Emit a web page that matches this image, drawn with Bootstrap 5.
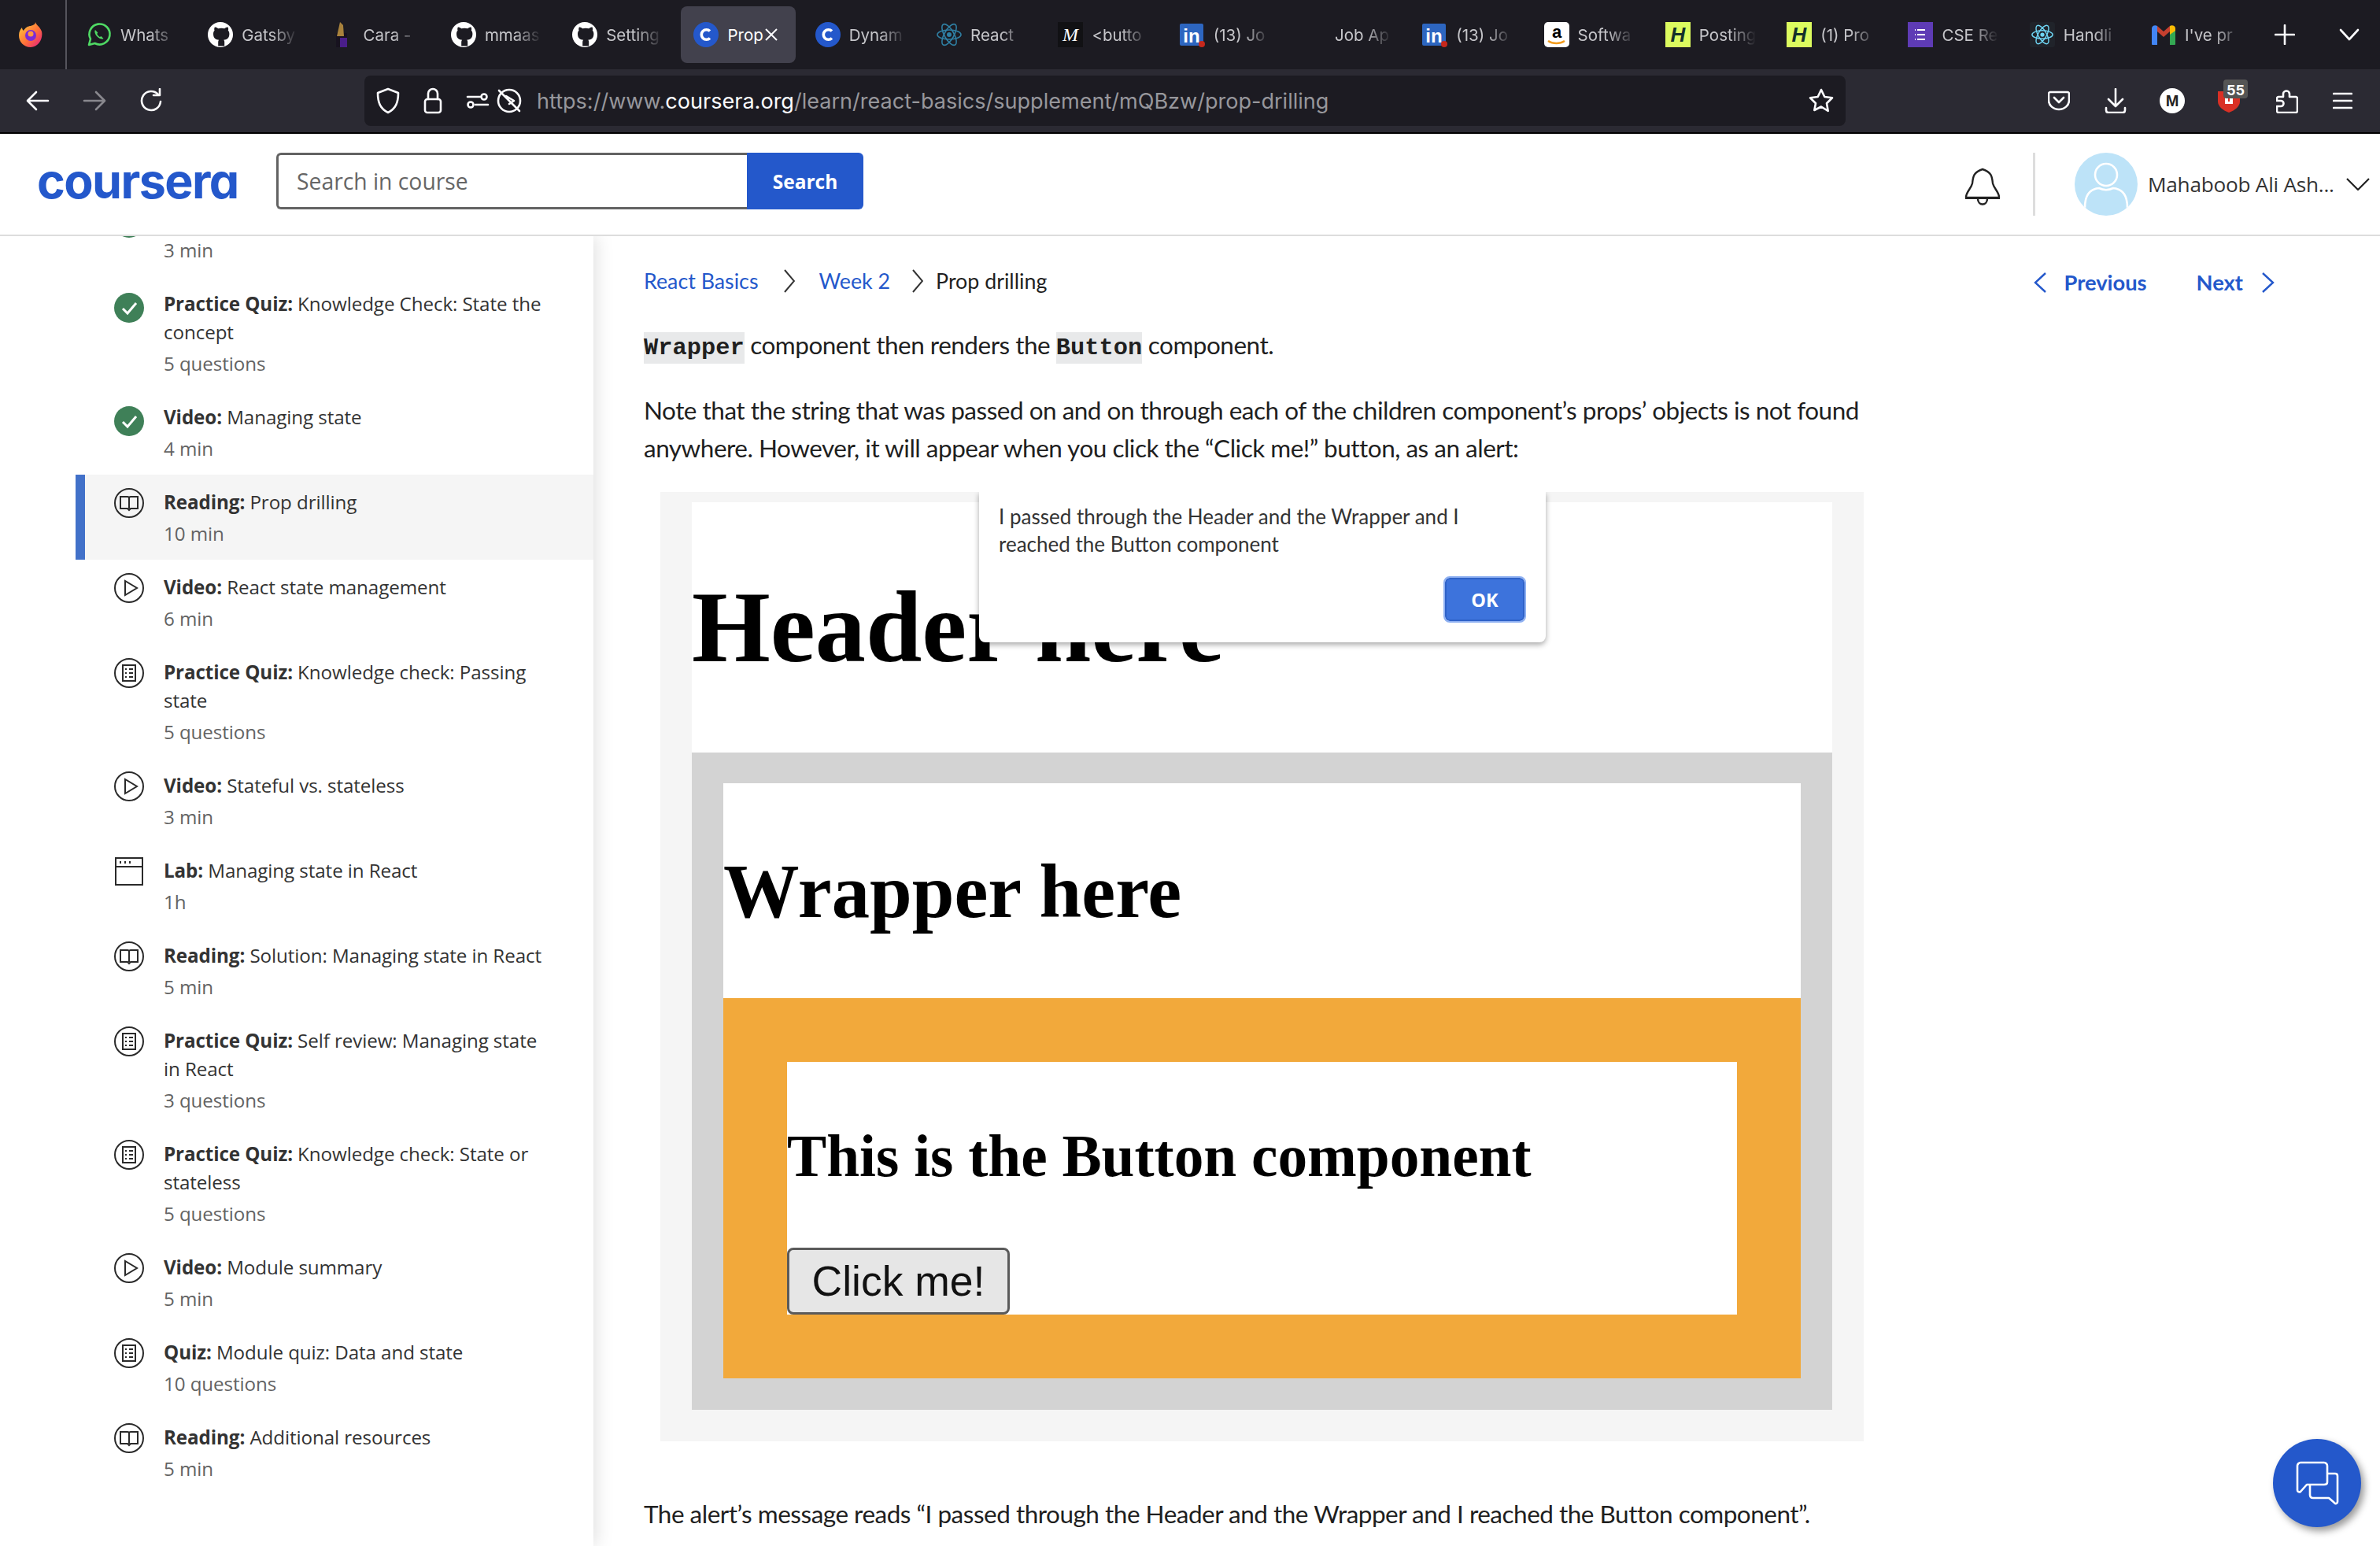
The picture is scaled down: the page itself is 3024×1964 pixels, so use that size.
<!DOCTYPE html>
<html lang="en">
<head>
<meta charset="utf-8">
<title>Prop drilling | Coursera</title>
<link href="https://cdn.jsdelivr.net/npm/bootstrap@5.3.0/dist/css/bootstrap.min.css" rel="stylesheet">
<style>
html,body{width:3024px;height:1964px;overflow:hidden;margin:0;background:#fff}
body{font-family:"Lato","Liberation Sans",sans-serif;color:#1f1f1f}
.ff-tabs{height:88px;background:#1c1b22;color:#c6c6ca;font-family:"Inter","Liberation Sans",sans-serif}
.ff-logo{width:85px;height:88px;border-right:2px solid #55545c;flex:none;padding-right:5px}
.ff-strip{padding-top:8px;margin-left:5px}
.ff-tab{width:154.3px;height:72px;flex:none;position:relative;display:flex;align-items:center;padding-left:20px;gap:11px}
.ff-tab.on::before{content:"";position:absolute;left:4px;right:5px;top:0;bottom:0;background:#42414d;border-radius:8px}
.ff-tab>*{position:relative}
.ff-ico{width:32px;height:32px;flex:none;display:block}
.ff-name{font-size:20.5px;width:76px;padding-top:3px;white-space:nowrap;overflow:hidden;-webkit-mask-image:linear-gradient(90deg,#000 50%,transparent 95%);mask-image:linear-gradient(90deg,#000 50%,transparent 95%)}
.ff-tab.on .ff-name{width:48px;color:#fff;-webkit-mask-image:none;mask-image:none}
.ff-x{width:18px;height:18px;flex:none;margin-left:-12px}
.ff-ctl{height:72px}
.ff-plus{margin-left:23px}
.ff-more{margin-left:56px}
.atom-dim{color:#2f7fa3}
.atom-lit{color:#6fd6f5}
.ff-bar{height:82px;background:#2b2a33;border-bottom:2px solid #000}
.ff-url{width:1882px;height:64px;margin-left:256px;flex:none;background:#1c1b22;border-radius:8px;font-family:"Inter","Liberation Sans",sans-serif;font-size:27.05px;color:#97979c;white-space:nowrap}
.ff-url b{font-weight:400;color:#fbfbfe}
.ff-url-text{margin-left:18px;padding-top:3px}
.ff-svg{display:block;flex:none;fill:none;stroke:#fbfbfe;stroke-width:2.6;stroke-linecap:round;stroke-linejoin:round}
.t-back{margin-left:33px}
.t-fwd{margin-left:42px;opacity:.45}
.t-reload{margin-left:42px}
.u-shield{margin-left:14px}
.u-lock{margin-left:29px}
.u-perm{margin-left:30px}
.u-auto{margin-left:8px}
.u-star{margin-right:15px}
.t-pocket{margin-left:257px}
.t-dl{margin-left:44px}
.t-acct{margin-left:42px;flex:none}
.t-ublock{margin-left:42px;width:28px;height:30px;position:relative;flex:none}
.t-badge{position:absolute;left:7px;top:-12px;width:31px;height:24px;background:#555;font:700 18px "Inter",sans-serif;padding:3px 4px;color:#fff}
.t-ext{margin-left:46px}
.t-menu{margin-left:44px}
.site-head{height:130px;border-bottom:2px solid #ddd;padding:0 13px 0 47px;background:#fff;position:relative;z-index:3}
.cs-logo{font-family:"Inter",sans-serif;font-feature-settings:"cv11";font-weight:700;font-size:61px;letter-spacing:-1.6px;color:#2458cb;width:304px;line-height:1;flex:none;margin-top:-8px}
.cs-group{width:746px;height:72px;flex:none;margin-top:-8px}
.cs-group .form-control{height:72px;border:3px solid #636363;border-right:0;border-radius:6px 0 0 6px;font:28.3px "Open Sans",sans-serif;padding:0 23px;box-shadow:none}
.cs-group .form-control::placeholder{color:#666}
.cs-group .btn{width:148px;height:72px;background:#2458cb;border:0;border-radius:0 6px 6px 0;font:700 24.5px "Open Sans",sans-serif;color:#fff;padding:0;margin-left:0!important}
.head-bell{flex:none;margin-top:4px}
.head-div{width:3px;height:80px;background:#ddd;flex:none;margin-left:41px}
.head-ava{width:80px;height:80px;flex:none;border-radius:50%;background:#bde3f8;margin-left:50px}
.head-name{font:26.2px "Open Sans",sans-serif;color:#333;width:234px;margin-left:13px;white-space:nowrap;letter-spacing:-.25px}
.head-caret{margin-left:18px;flex:none}
.body-row{height:1664px}
.side{width:754px;flex:none;overflow:hidden;background:#fff;box-shadow:3px 0 22px rgba(0,0,0,.13);position:relative;z-index:2;padding-left:96px}
.side-list{margin-top:-57px;border-radius:0;background:transparent}
.side-list .side-item{display:flex;padding:17px 54px 15px 37px;border-width:0 0 0 12px;border-style:solid;border-color:transparent;background:transparent;color:#333;font:24.2px/36px "Open Sans",sans-serif;letter-spacing:-.1px}
.side-list .side-item.active{background:#f5f5f5;border-width:0 0 0 12px;border-color:#4271c9;color:#333;margin-top:0}
.side-item svg{width:38px;height:38px;flex:none;margin:0 25px 0 0;fill:none;stroke:#2a2a2a;stroke-width:2}
.side-item svg.done{margin-top:4px}
.side-item b{font-weight:700}
.side-meta{color:#636363;margin-top:4px;display:block}
.side-title{min-height:36px;display:block}
.content{flex:1;padding:33px 133px 0 64px;min-width:0;font-family:"Lato",sans-serif}
.crumbs{height:48px}
.crumbs .breadcrumb{margin:0;font-size:26.8px;line-height:48px}
.crumbs a{color:#2458cb;text-decoration:none}
.crumb-sep{width:14px;height:30px;margin:0 31px 0 32px;fill:none;stroke:#333;stroke-width:2}
.crumb-sep.last{margin-right:16px;margin-left:28px}
.pager{font-size:27.3px;font-weight:700;color:#2458cb;gap:18px;padding-top:4px}
.pager svg{width:18px;height:28px;fill:none;stroke:#2458cb;stroke-width:2.4}
.pager-prev{margin-left:4px}
.pager-next{margin:0 5px 0 45px}
.para{font-size:31.5px;line-height:48px;width:1560px;color:#1f1f1f;letter-spacing:-.5px}
.para code{font:700 30.4px "Liberation Mono",monospace;color:#1f1f1f;background:#e8e9ea;padding:3px 0;letter-spacing:0}
.para1{margin:33px 0 0}
.para2{margin:35px 0 0}
.shot{width:1529px;height:1206px;margin:32px 0 0 21px;background:#f5f5f5;padding:13px 40px 40px;position:relative}
.shot-head{height:318px;background:#fff;padding-top:95px}
.shot-h{font-family:"Liberation Serif",serif;font-weight:700;color:#000;margin:0;line-height:1;letter-spacing:0}
.shot-h1{font-size:128.3px}
.shot-h2{font-size:96.6px}
.shot-h3{font-size:75.3px}
.shot-gray{height:835px;background:#d3d3d3;padding:39px 40px}
.shot-wrap{height:273px;background:#fff;padding-top:90px}
.shot-orange{height:483px;background:#f2a93b;padding:81px}
.shot-btn-box{height:321px;background:#fff;padding-top:82px;display:flex;flex-direction:column;justify-content:space-between;align-items:flex-start}
.shot-btn{width:283px;height:85px;background:#e6e6e6;border:3px solid #5a5a5a;border-radius:8px;font:53.5px/1 "Liberation Sans",sans-serif;color:#111;padding:0}
.alert-box{position:absolute;left:405px;top:0;width:720px;height:191px;background:#fff;border-radius:0 0 8px 8px;box-shadow:0 3px 7px rgba(0,0,0,.35);clip-path:inset(0 -20px -20px -20px);padding:14px 25px;font:26px/35px "Lato",sans-serif;color:#333}
.alert-ok{position:absolute;right:27px;bottom:27px;width:101px;height:55px;background:#3d73dc;border:2px solid #2f62c8;outline:2px solid #8fb1f2;outline-offset:0;border-radius:6px;color:#fff;font:700 23.5px "Open Sans",sans-serif;padding:0}
.para3{margin:68px 0 0;white-space:nowrap}
.chat-fab{position:fixed;left:2888px;top:1828px;width:112px;height:112px;border-radius:50%;background:#2458cb;box-shadow:4px 5px 10px rgba(0,0,0,.4);z-index:5;border:0;padding:0}
</style>
</head>
<body>
<svg width="0" height="0" class="position-absolute">
<defs>
<symbol id="i-gh" viewBox="0 0 16 16"><circle cx="8" cy="8" r="8" fill="#fff"/><path fill="#1c1b22" d="M10.600 15.300v-2.600c0-.7-.2-1-.5-1.300 1.800-.2 3.600-.9 3.600-3.900 0-.9-.3-1.600-.8-2.100.1-.2.4-1-.1-2.100 0 0-.7-.2-2.200.8a7.500 7.500 0 0 0-4 0c-1.500-1-2.200-.8-2.200-.8-.5 1.100-.2 1.900-.1 2.100-.5.5-.8 1.200-.8 2.100 0 3 1.800 3.700 3.600 3.900-.3.3-.5.7-.5 1.200v2.700z"/></symbol>
<symbol id="i-c" viewBox="0 0 32 32"><circle cx="16" cy="16" r="16" fill="#2458cb"/><path d="M21 11.500a6.300 6.300 0 1 0 0 9" fill="none" stroke="#fff" stroke-width="3.600"/></symbol>
<symbol id="i-atom" viewBox="0 0 32 32"><g fill="none" stroke="currentColor" stroke-width="1.600"><ellipse cx="16" cy="16" rx="15" ry="6"/><ellipse cx="16" cy="16" rx="15" ry="6" transform="rotate(60 16 16)"/><ellipse cx="16" cy="16" rx="15" ry="6" transform="rotate(120 16 16)"/></g><circle cx="16" cy="16" r="3" fill="currentColor"/></symbol>
<symbol id="i-check" viewBox="0 0 38 38"><circle cx="19" cy="19" r="19" fill="#3f8058" stroke="none"/><path d="M11 20l6 6 11-13" fill="none" stroke="#fff" stroke-width="3"/></symbol>
<symbol id="i-book" viewBox="0 0 38 38"><circle cx="19" cy="19" r="18"/><path d="M8 11h9c1.200 0 2 .8 2 2 0-1.200.8-2 2-2h9v15h-9l-2 2-2-2H8zM19 13v13"/></symbol>
<symbol id="i-play" viewBox="0 0 38 38"><circle cx="19" cy="19" r="18"/><path d="M14 10v18l15-9z"/></symbol>
<symbol id="i-quiz" viewBox="0 0 38 38"><circle cx="19" cy="19" r="18"/><rect x="11" y="9" width="16" height="20"/><path d="M14 14h2M19 14h5M14 19h2M19 19h5M14 24h2M19 24h5"/></symbol>
<symbol id="i-lab" viewBox="0 0 38 38"><rect x="2" y="2" width="34" height="34"/><path d="M2 13h34"/><path d="M7 7.500h2M13 7.500h2M19 7.500h2" stroke-width="3"/></symbol>
<symbol id="i-in" viewBox="0 0 32 32"><rect y="2" width="30" height="28" rx="2" fill="#2d66c0"/><circle cx="28" cy="28" r="4" fill="#c5281c"/></symbol>
</defs>
</svg>

<div class="ff-tabs d-flex align-items-start">
  <div class="ff-logo d-flex align-items-center justify-content-center">
    <svg width="30" height="32" viewBox="0 0 30 32"><defs><linearGradient id="fx" x1="0" y1="0" x2="1" y2="1"><stop offset="0" stop-color="#ffd33d"/><stop offset=".55" stop-color="#ff7139"/><stop offset="1" stop-color="#e31587"/></linearGradient></defs><path fill="url(#fx)" d="M21 0c1 4 6 6 8 12 2 9-4 20-14 20C6 32 0 25 0 17c0-5 2-8 4-10 0 2 1 3 2 4 2-4 6-6 9-6 3-1 6-2 6-5z"/><circle cx="15" cy="17" r="7" fill="#7a2bd8"/><circle cx="15" cy="15" r="3.500" fill="#ff9640"/></svg>
  </div>
  <div class="d-flex ff-strip">
    <div class="ff-tab"><svg class="ff-ico" viewBox="0 0 32 32"><path d="M3 29l2-7.500A13 13 0 1 1 10.500 27z" fill="none" stroke="#4fd964" stroke-width="2.600" stroke-linejoin="round"/><path d="M11 10c-1.500 2 0 6 2.500 8.500s6 4 8 2.500l-3-3-1.600 1c-1.500-.8-3-2.500-3.600-4l1-1.500z" fill="#4fd964"/></svg><span class="ff-name">Whats</span></div>
    <div class="ff-tab"><svg class="ff-ico"><use href="#i-gh"/></svg><span class="ff-name">Gatsby</span></div>
    <div class="ff-tab"><svg class="ff-ico" viewBox="0 0 32 32"><rect x="8" y="14" width="14" height="18" fill="#17121f"/><rect x="13" y="20" width="9" height="12" fill="#4a1e8a"/><path d="M13 0l4 4 1 14H9z" fill="#a8823c"/></svg><span class="ff-name">Cara -</span></div>
    <div class="ff-tab"><svg class="ff-ico"><use href="#i-gh"/></svg><span class="ff-name">mmaas</span></div>
    <div class="ff-tab"><svg class="ff-ico"><use href="#i-gh"/></svg><span class="ff-name">Setting</span></div>
    <div class="ff-tab on"><svg class="ff-ico"><use href="#i-c"/></svg><span class="ff-name">Prop</span><svg class="ff-x" viewBox="0 0 18 18" fill="none" stroke="#fbfbfe" stroke-width="2"><path d="M2 2l14 14M16 2L2 16"/></svg></div>
    <div class="ff-tab"><svg class="ff-ico"><use href="#i-c"/></svg><span class="ff-name">Dynam</span></div>
    <div class="ff-tab"><svg class="ff-ico atom-dim"><use href="#i-atom"/></svg><span class="ff-name">React</span></div>
    <div class="ff-tab"><svg class="ff-ico" viewBox="0 0 32 32"><rect width="32" height="32" fill="#111114"/><text x="16" y="24" text-anchor="middle" font-family="Liberation Serif" font-style="italic" font-size="24" fill="#fff">M</text></svg><span class="ff-name">&lt;butto</span></div>
    <div class="ff-tab"><svg class="ff-ico" viewBox="0 0 32 32"><use href="#i-in"/><text x="15" y="26" text-anchor="middle" font-family="Liberation Sans" font-weight="700" font-size="24" fill="#fff">in</text></svg><span class="ff-name">(13) Jo</span></div>
    <div class="ff-tab"><span class="ff-ico"></span><span class="ff-name">Job Ap</span></div>
    <div class="ff-tab"><svg class="ff-ico" viewBox="0 0 32 32"><use href="#i-in"/><text x="15" y="26" text-anchor="middle" font-family="Liberation Sans" font-weight="700" font-size="24" fill="#fff">in</text></svg><span class="ff-name">(13) Jo</span></div>
    <div class="ff-tab"><svg class="ff-ico" viewBox="0 0 32 32"><rect width="32" height="32" rx="5" fill="#fff"/><text x="16" y="20" text-anchor="middle" font-family="Liberation Sans" font-weight="700" font-size="22" fill="#000">a</text><path d="M5 24c6 4 15 4 21 0" fill="none" stroke="#f29c1f" stroke-width="2.500"/></svg><span class="ff-name">Softwa</span></div>
    <div class="ff-tab"><svg class="ff-ico" viewBox="0 0 32 32"><rect width="32" height="32" fill="#dcfb5f"/><text x="16" y="25" text-anchor="middle" font-family="Liberation Sans" font-style="italic" font-weight="700" font-size="26" fill="#12302a">H</text></svg><span class="ff-name">Posting</span></div>
    <div class="ff-tab"><svg class="ff-ico" viewBox="0 0 32 32"><rect width="32" height="32" fill="#dcfb5f"/><text x="16" y="25" text-anchor="middle" font-family="Liberation Sans" font-style="italic" font-weight="700" font-size="26" fill="#12302a">H</text></svg><span class="ff-name">(1) Pro</span></div>
    <div class="ff-tab"><svg class="ff-ico" viewBox="0 0 32 32"><rect width="32" height="32" fill="#5e3bb5"/><path d="M12 10h10M12 16h10M12 22h10M9 10h1M9 16h1M9 22h1" stroke="#fff" stroke-width="1.800"/></svg><span class="ff-name">CSE Re</span></div>
    <div class="ff-tab"><svg class="ff-ico atom-lit" viewBox="0 0 32 32"><rect width="32" height="32" rx="3" fill="#20232a"/><use href="#i-atom" width="28" height="28" x="2" y="2"/></svg><span class="ff-name">Handli</span></div>
    <div class="ff-tab"><svg class="ff-ico" viewBox="0 0 32 32"><path d="M8 12L16 19l8-7V5L16 12 8 5z" fill="#c5402f"/><path d="M1 28V8c0-3 4-5 7-3v24H3c-1 0-2 0-2-1z" fill="#4285f4"/><path d="M24 29V15l7-5v18c0 1-1 1-2 1z" fill="#34a853"/><path d="M24 5c3-2 7 0 7 3v3l-7 5z" fill="#fbbc04"/></svg><span class="ff-name">I've pr</span></div>
    <div class="ff-plus ff-ctl d-flex align-items-center"><svg class="ff-svg" width="26" height="26" viewBox="0 0 26 26"><path d="M13 1v24M1 13h24"/></svg></div>
    <div class="ff-more ff-ctl d-flex align-items-center"><svg class="ff-svg" width="26" height="16" viewBox="0 0 26 16"><path d="M2 2l11 12L24 2"/></svg></div>
  </div>
</div>

<div class="ff-bar d-flex align-items-center">
  <svg class="ff-svg t-back" width="30" height="30" viewBox="0 0 30 30"><path d="M28 15H3M13 4L2 15l11 11"/></svg>
  <svg class="ff-svg t-fwd" width="30" height="30" viewBox="0 0 30 30"><path d="M2 15h25M17 4l11 11-11 11"/></svg>
  <svg class="ff-svg t-reload" width="30" height="32" viewBox="0 0 30 32"><path d="M24 8a12 12 0 1 0 3 9M26 1v8h-8"/></svg>
  <div class="ff-url d-flex align-items-center">
    <svg class="ff-svg u-shield" width="32" height="34" viewBox="0 0 32 34"><path d="M16 2l13 5c0 12-3 20-13 25C6 27 3 19 3 7z"/></svg>
    <svg class="ff-svg u-lock" width="24" height="34" viewBox="0 0 24 34"><rect x="2" y="15" width="20" height="17" rx="3"/><path d="M6 15V8a6 6 0 0 1 12 0v7"/></svg>
    <svg class="ff-svg u-perm" width="30" height="24" viewBox="0 0 30 24"><circle cx="6" cy="17" r="3.500"/><circle cx="23" cy="7" r="3.500"/><path d="M2 7h16M12 17h16"/></svg>
    <svg class="ff-svg u-auto" width="34" height="34" viewBox="0 0 34 34"><circle cx="17" cy="17" r="14"/><path d="M13 11l10 6-6 4M4 4l26 26"/></svg>
    <span class="ff-url-text">https://www.<b>coursera.org</b>/learn/react-basics/supplement/mQBzw/prop-drilling</span>
    <svg class="ff-svg ms-auto u-star" width="32" height="32" viewBox="0 0 32 32"><path d="M16 2l4.300 9 9.700 1.300-7 6.900 1.700 9.800L16 23.500 7.300 28 9 19.200 2 12.300 11.700 11z"/></svg>
  </div>
  <svg class="ff-svg t-pocket" width="28" height="26" viewBox="0 0 28 26"><path d="M3 2h22c1 0 2 1 2 2v8c0 7-6 12-13 12S1 19 1 12V4c0-1 1-2 2-2zM8 9l6 6 6-6"/></svg>
  <svg class="ff-svg t-dl" width="28" height="32" viewBox="0 0 28 32"><path d="M14 1v21M5 14l9 9 9-9M2 25v3c0 2 1 3 3 3h18c2 0 3-1 3-3v-3"/></svg>
  <svg class="t-acct" width="32" height="32" viewBox="0 0 32 32"><circle cx="16" cy="16" r="16" fill="#fff"/><text x="16" y="23" text-anchor="middle" font-family="Liberation Sans" font-weight="700" font-size="20" fill="#222">M</text></svg>
  <div class="t-ublock">
    <svg width="28" height="30" viewBox="0 0 28 30"><path d="M0 3h28v13c0 6-6 11-14 14C6 27 0 22 0 16z" fill="#d93025"/><rect x="9" y="9" width="10" height="10" fill="#fff"/><rect x="13" y="10" width="2" height="6" fill="#d93025"/></svg>
    <span class="t-badge badge rounded-1">55</span>
  </div>
  <svg class="ff-svg t-ext" width="28" height="32" viewBox="0 0 28 32"><path d="M3 31c-1 0-2-1-2-2v-6h5a3.500 3.500 0 0 0 0-7H1v-3c0-1 1-2 2-2h6V8a4 4 0 0 1 8-1v4h8c1 0 2 1 2 2v16c0 1-1 2-2 2z"/></svg>
  <svg class="ff-svg t-menu" width="25" height="22" viewBox="0 0 25 22"><path d="M1 2h23M1 11h23M1 20h23"/></svg>
</div>

<header class="site-head d-flex align-items-center">
  <div class="cs-logo">coursera</div>
  <form class="input-group cs-group">
    <input class="form-control" type="text" placeholder="Search in course" aria-label="Search in course">
    <button class="btn btn-primary" type="button">Search</button>
  </form>
  <svg class="ms-auto head-bell" width="46" height="50" viewBox="0 0 46 50" fill="none" stroke="#222" stroke-width="2.400"><path d="M2 40c0-8 6-10 8-18 1-8 1-14 13-18 12 4 12 10 13 18 2 8 8 10 8 18z" stroke-linejoin="round"/><path d="M1 40.500h44" stroke-width="3"/><path d="M17 41c0 10 12 10 12 0"/></svg>
  <div class="head-div"></div>
  <div class="head-ava overflow-hidden">
    <svg width="80" height="80" viewBox="0 0 80 80" fill="none" stroke="#fff" stroke-width="2.600"><ellipse cx="40" cy="28" rx="14" ry="14"/><path d="M13 70c0-16 6-24 18-25 6 3 12 3 18 0 12 1 18 9 18 25"/></svg>
  </div>
  <div class="head-name">Mahaboob Ali Ash...</div>
  <svg class="head-caret" width="30" height="16" viewBox="0 0 30 16" fill="none" stroke="#222" stroke-width="2.200"><path d="M1 1l14 14L29 1"/></svg>
</header>

<div class="body-row d-flex">
  <nav class="side">
    <ul class="list-group list-group-flush side-list">
      <li class="list-group-item side-item"><svg class="done"><use href="#i-check"/></svg><div><span class="side-title"></span><span class="side-meta">3 min</span></div></li>
      <li class="list-group-item side-item"><svg class="done"><use href="#i-check"/></svg><div><span class="side-title"><b>Practice Quiz:</b> Knowledge Check: State the concept</span><span class="side-meta">5 questions</span></div></li>
      <li class="list-group-item side-item"><svg class="done"><use href="#i-check"/></svg><div><span class="side-title"><b>Video:</b> Managing state</span><span class="side-meta">4 min</span></div></li>
      <li class="list-group-item side-item active"><svg><use href="#i-book"/></svg><div><span class="side-title"><b>Reading:</b> Prop drilling</span><span class="side-meta">10 min</span></div></li>
      <li class="list-group-item side-item"><svg><use href="#i-play"/></svg><div><span class="side-title"><b>Video:</b> React state management</span><span class="side-meta">6 min</span></div></li>
      <li class="list-group-item side-item"><svg><use href="#i-quiz"/></svg><div><span class="side-title"><b>Practice Quiz:</b> Knowledge check: Passing state</span><span class="side-meta">5 questions</span></div></li>
      <li class="list-group-item side-item"><svg><use href="#i-play"/></svg><div><span class="side-title"><b>Video:</b> Stateful vs. stateless</span><span class="side-meta">3 min</span></div></li>
      <li class="list-group-item side-item"><svg><use href="#i-lab"/></svg><div><span class="side-title"><b>Lab:</b> Managing state in React</span><span class="side-meta">1h</span></div></li>
      <li class="list-group-item side-item"><svg><use href="#i-book"/></svg><div><span class="side-title"><b>Reading:</b> Solution: Managing state in React</span><span class="side-meta">5 min</span></div></li>
      <li class="list-group-item side-item"><svg><use href="#i-quiz"/></svg><div><span class="side-title"><b>Practice Quiz:</b> Self review: Managing state in React</span><span class="side-meta">3 questions</span></div></li>
      <li class="list-group-item side-item"><svg><use href="#i-quiz"/></svg><div><span class="side-title"><b>Practice Quiz:</b> Knowledge check: State or stateless</span><span class="side-meta">5 questions</span></div></li>
      <li class="list-group-item side-item"><svg><use href="#i-play"/></svg><div><span class="side-title"><b>Video:</b> Module summary</span><span class="side-meta">5 min</span></div></li>
      <li class="list-group-item side-item"><svg><use href="#i-quiz"/></svg><div><span class="side-title"><b>Quiz:</b> Module quiz: Data and state</span><span class="side-meta">10 questions</span></div></li>
      <li class="list-group-item side-item"><svg><use href="#i-book"/></svg><div><span class="side-title"><b>Reading:</b> Additional resources</span><span class="side-meta">5 min</span></div></li>
    </ul>
  </nav>
  <main class="content">
    <div class="crumbs d-flex justify-content-between align-items-center">
      <div class="breadcrumb align-items-center">
        <a href="#">React Basics</a>
        <svg class="crumb-sep" viewBox="0 0 14 30"><path d="M1 1l12 14L1 29"/></svg>
        <a href="#">Week 2</a>
        <svg class="crumb-sep last" viewBox="0 0 14 30"><path d="M1 1l12 14L1 29"/></svg>
        <span>Prop drilling</span>
      </div>
      <div class="pager d-flex align-items-center">
        <svg viewBox="0 0 18 28"><path d="M16 2L3 14l13 12"/></svg>
        <span class="pager-prev">Previous</span>
        <span class="pager-next">Next</span>
        <svg viewBox="0 0 18 28"><path d="M2 2l13 12L2 26"/></svg>
      </div>
    </div>
    <p class="para para1"><code>Wrapper</code> component then renders the <code>Button</code> component.</p>
    <p class="para para2">Note that the string that was passed on and on through each of the children component’s props’ objects is not found anywhere. However, it will appear when you click the “Click me!” button, as an alert:</p>
    <div class="shot">
      <div class="shot-head"><h1 class="shot-h shot-h1">Header here</h1></div>
      <div class="shot-gray">
        <div class="shot-wrap"><h2 class="shot-h shot-h2">Wrapper here</h2></div>
        <div class="shot-orange">
          <div class="shot-btn-box">
            <h3 class="shot-h shot-h3">This is the Button component</h3>
            <button class="shot-btn" type="button">Click me!</button>
          </div>
        </div>
      </div>
      <div class="alert-box">I passed through the Header and the Wrapper and I<br>reached the Button component<button class="alert-ok" type="button">OK</button></div>
    </div>
    <p class="para para3">The alert’s message reads “I passed through the Header and the Wrapper and I reached the Button component”.</p>
  </main>
</div>

<button class="chat-fab d-flex align-items-center justify-content-center" type="button" aria-label="Chat">
  <svg width="56" height="56" viewBox="0 0 56 56" fill="none" stroke="#fff" stroke-width="2.600" stroke-linejoin="round"><path d="M3 6c0-2 2-4 4-4h30c2 0 4 2 4 4v21c0 2-2 3-4 3H15l-8 9c-2 1-4 0-4-2z"/><path d="M41 16h10c2 0 3 1 3 3v33c0 2-3 3-4 1l-7-6H23c-3 0-4-2-4-4V30"/></svg>
</button>
</body>
</html>
